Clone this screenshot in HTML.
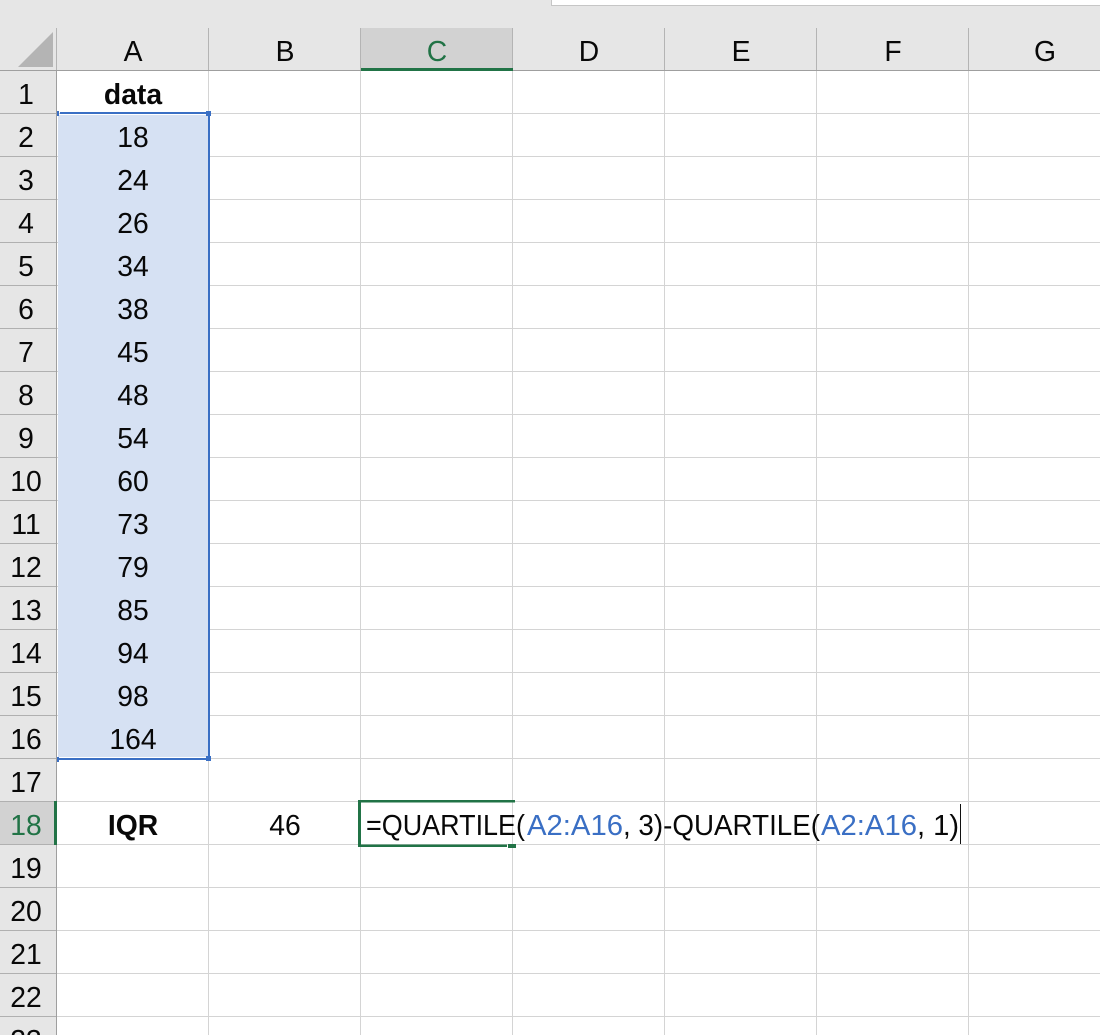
<!DOCTYPE html>
<html lang="en"><head><meta charset="utf-8"><title>Excel QUARTILE</title>
<style>
html,body{margin:0;padding:0;background:#fff;width:1100px;height:1035px;overflow:hidden}
svg{display:block}
text{font-family:"Liberation Sans",sans-serif;font-size:28.3px;fill:#080808;text-anchor:middle}
.b{font-weight:bold}
.f{text-anchor:start}
text.blue{fill:#3a6fc4}
text.green{fill:#217346}
</style></head><body>
<svg width="1100" height="1035" viewBox="0 0 1100 1035" xmlns="http://www.w3.org/2000/svg">
<rect width="1100" height="1035" fill="#fff"/>
<!-- header bars -->
<rect width="1100" height="70" fill="#e6e6e6"/>
<rect x="0" y="70" width="56" height="965" fill="#e6e6e6"/>
<rect x="552" y="0" width="548" height="5" fill="#fff"/>
<rect x="551" y="0" width="1" height="6" fill="#c6c6c6"/>
<rect x="551" y="5" width="549" height="1" fill="#c6c6c6"/>
<polygon points="18,67 53,32 53,67" fill="#b4b4b4"/>
<!-- selected headers -->
<rect x="361" y="28" width="152" height="42" fill="#d2d2d2"/>
<rect x="0" y="802" width="56" height="42" fill="#d2d2d2"/>
<!-- grid -->
<g fill="#d4d4d4">
<rect x="208" y="70" width="1" height="965"/><rect x="360" y="70" width="1" height="965"/><rect x="512" y="70" width="1" height="965"/><rect x="664" y="70" width="1" height="965"/><rect x="816" y="70" width="1" height="965"/><rect x="968" y="70" width="1" height="965"/>
<rect x="57" y="113" width="1043" height="1"/><rect x="57" y="156" width="1043" height="1"/><rect x="57" y="199" width="1043" height="1"/><rect x="57" y="242" width="1043" height="1"/><rect x="57" y="285" width="1043" height="1"/><rect x="57" y="328" width="1043" height="1"/><rect x="57" y="371" width="1043" height="1"/><rect x="57" y="414" width="1043" height="1"/><rect x="57" y="457" width="1043" height="1"/><rect x="57" y="500" width="1043" height="1"/><rect x="57" y="543" width="1043" height="1"/><rect x="57" y="586" width="1043" height="1"/><rect x="57" y="629" width="1043" height="1"/><rect x="57" y="672" width="1043" height="1"/><rect x="57" y="715" width="1043" height="1"/><rect x="57" y="758" width="1043" height="1"/><rect x="57" y="801" width="1043" height="1"/><rect x="57" y="844" width="1043" height="1"/><rect x="57" y="887" width="1043" height="1"/><rect x="57" y="930" width="1043" height="1"/><rect x="57" y="973" width="1043" height="1"/><rect x="57" y="1016" width="1043" height="1"/>
</g>
<!-- header separators -->
<g fill="#b4b4b4">
<rect x="208" y="28" width="1" height="42"/><rect x="360" y="28" width="1" height="42"/><rect x="512" y="28" width="1" height="42"/><rect x="664" y="28" width="1" height="42"/><rect x="816" y="28" width="1" height="42"/><rect x="968" y="28" width="1" height="42"/><rect x="56" y="28" width="1" height="42"/>
</g>
<g fill="#b0b0b0">
<rect x="0" y="113" width="56" height="1"/><rect x="0" y="156" width="56" height="1"/><rect x="0" y="199" width="56" height="1"/><rect x="0" y="242" width="56" height="1"/><rect x="0" y="285" width="56" height="1"/><rect x="0" y="328" width="56" height="1"/><rect x="0" y="371" width="56" height="1"/><rect x="0" y="414" width="56" height="1"/><rect x="0" y="457" width="56" height="1"/><rect x="0" y="500" width="56" height="1"/><rect x="0" y="543" width="56" height="1"/><rect x="0" y="586" width="56" height="1"/><rect x="0" y="629" width="56" height="1"/><rect x="0" y="672" width="56" height="1"/><rect x="0" y="715" width="56" height="1"/><rect x="0" y="758" width="56" height="1"/><rect x="0" y="801" width="56" height="1"/><rect x="0" y="844" width="56" height="1"/><rect x="0" y="887" width="56" height="1"/><rect x="0" y="930" width="56" height="1"/><rect x="0" y="973" width="56" height="1"/><rect x="0" y="1016" width="56" height="1"/>
</g>
<rect x="0" y="70" width="1100" height="1" fill="#9f9f9f"/>
<rect x="56" y="70" width="1" height="965" fill="#9f9f9f"/>
<rect x="361" y="68" width="152" height="3" fill="#217346"/>
<rect x="54" y="801" width="3" height="44" fill="#217346"/>
<!-- selection A2:A16 -->
<rect x="58" y="115" width="150" height="642" fill="#d6e1f3"/>
<rect x="60" y="112" width="147" height="2" fill="#3a6fc4"/>
<rect x="59" y="758" width="148" height="2" fill="#3a6fc4"/>
<rect x="208" y="114" width="2" height="643" fill="#3a6fc4"/>
<rect x="57" y="111" width="2" height="5" fill="#3a6fc4"/>
<rect x="57" y="757" width="2" height="5" fill="#3a6fc4"/>
<rect x="206" y="111" width="5" height="5" fill="#3a6fc4"/>
<rect x="206" y="756" width="5" height="5" fill="#3a6fc4"/>
<!-- active cell -->
<rect x="358" y="800" width="157" height="2.5" fill="#217346"/>
<rect x="358" y="800" width="3" height="47" fill="#217346"/>
<rect x="358" y="844.5" width="149" height="2.5" fill="#217346"/>
<rect x="508" y="844" width="8" height="4" fill="#217346"/>
<g transform="translate(0,1)">
<!-- column headers -->
<text x="133" y="60">A</text><text x="285" y="60">B</text><text x="437" y="60" class="green">C</text><text x="589" y="60">D</text><text x="741" y="60">E</text><text x="893" y="60">F</text><text x="1045" y="60">G</text>
<!-- row headers -->
<text x="26" y="103">1</text><text x="26" y="146">2</text><text x="26" y="189">3</text><text x="26" y="232">4</text><text x="26" y="275">5</text><text x="26" y="318">6</text><text x="26" y="361">7</text><text x="26" y="404">8</text><text x="26" y="447">9</text><text x="26" y="490">10</text><text x="26" y="533">11</text><text x="26" y="576">12</text><text x="26" y="619">13</text><text x="26" y="662">14</text><text x="26" y="705">15</text><text x="26" y="748">16</text><text x="26" y="791">17</text><text x="26" y="834" class="green">18</text><text x="26" y="877">19</text><text x="26" y="920">20</text><text x="26" y="963">21</text><text x="26" y="1006">22</text><text x="26" y="1049">23</text>
<!-- data -->
<text x="133" y="103" class="b">data</text>
<text x="133" y="146">18</text><text x="133" y="189">24</text><text x="133" y="232">26</text><text x="133" y="275">34</text><text x="133" y="318">38</text><text x="133" y="361">45</text><text x="133" y="404">48</text><text x="133" y="447">54</text><text x="133" y="490">60</text><text x="133" y="533">73</text><text x="133" y="576">79</text><text x="133" y="619">85</text><text x="133" y="662">94</text><text x="133" y="705">98</text><text x="133" y="748">164</text>
<text x="133" y="834" class="b">IQR</text>
<text x="285" y="834">46</text>
<!-- formula -->
<text class="f" x="366" y="834" textLength="159" lengthAdjust="spacingAndGlyphs">=QUARTILE(</text>
<text class="f blue" x="527" y="834" textLength="96" lengthAdjust="spacingAndGlyphs">A2:A16</text>
<text class="f" x="623" y="834" textLength="197" lengthAdjust="spacingAndGlyphs">, 3)-QUARTILE(</text>
<text class="f blue" x="821" y="834" textLength="96" lengthAdjust="spacingAndGlyphs">A2:A16</text>
<text class="f" x="917" y="834" textLength="42" lengthAdjust="spacingAndGlyphs">, 1)</text>
</g>
<rect x="960" y="804" width="1" height="40" fill="#111"/>
</svg>
</body></html>
